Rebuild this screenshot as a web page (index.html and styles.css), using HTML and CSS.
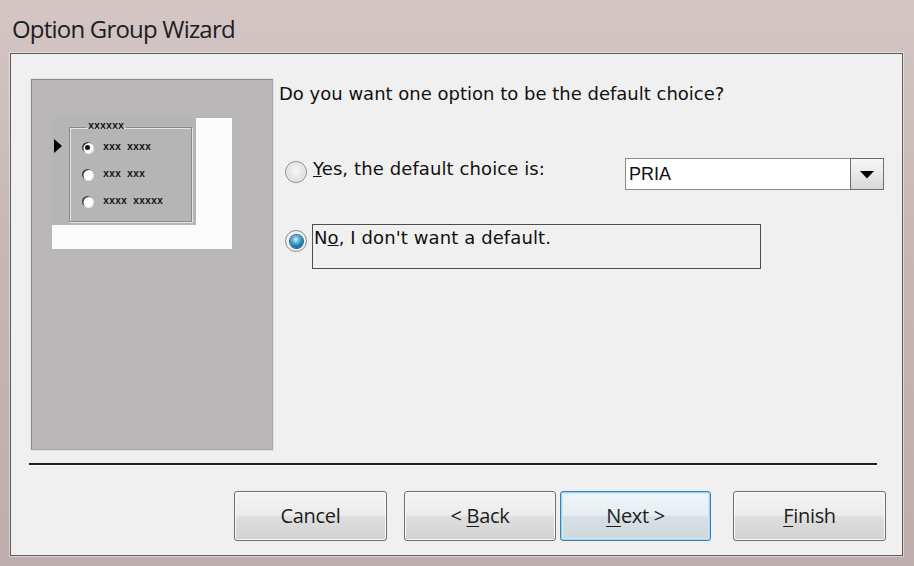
FILE: index.html
```html
<!DOCTYPE html>
<html>
<head>
<meta charset="utf-8">
<title>Option Group Wizard</title>
<link rel="stylesheet" href="styles.css">
</head>
<body>
<div class="window">
  <div class="titlebar"><span class="title">Option Group Wizard</span></div>
  <div class="client">
    <div class="top">
      <div class="preview">
        <div class="sample">
          <div class="sample-gray">
            <span class="pointer"></span>
            <fieldset class="groupbox">
              <legend class="gb-label">xxxxxx</legend>
              <div class="srow"><span class="sradio on"></span><span class="stext">xxx xxxx</span></div>
              <div class="srow"><span class="sradio"></span><span class="stext">xxx xxx</span></div>
              <div class="srow"><span class="sradio"></span><span class="stext">xxxx xxxxx</span></div>
            </fieldset>
          </div>
        </div>
      </div>
      <div class="content">
        <p class="question">Do you want one option to be the default choice?</p>
        <div class="opt opt-yes">
          <span class="radio"></span>
          <span class="label"><u>Y</u>es, the default choice is:</span>
          <div class="combo">
            <span class="combo-field">PRIA</span>
            <span class="combo-btn"><svg width="14" height="8" viewBox="0 0 14 8"><polygon points="0,0 14,0 7,7.5" fill="#000"/></svg></span>
          </div>
        </div>
        <div class="opt opt-no">
          <span class="radio checked"><span class="dot"></span></span>
          <div class="focusbox"><span class="label">N<u>o</u>, I don't want a default.</span></div>
        </div>
      </div>
    </div>
    <div class="sep"></div>
    <div class="buttons">
      <button class="btn btn-cancel">Cancel</button>
      <button class="btn btn-back">&lt; <u>B</u>ack</button>
      <button class="btn btn-next default"><u>N</u>ext &gt;</button>
      <button class="btn btn-finish"><u>F</u>inish</button>
    </div>
  </div>
</div>
</body>
</html>
```

FILE: styles.css
```css
* { box-sizing: border-box; }
html, body { margin: 0; padding: 0; }
body { width: 914px; height: 566px; overflow: hidden; font-family: "DejaVu Sans", sans-serif; }

.window {
  width: 914px; height: 566px;
  display: flex; flex-direction: column;
  padding: 0 11px 10px 10px;
  background: linear-gradient(180deg, #d3c6c4 0%, #c7b8b7 40%, #bdaead 100%);
}
.titlebar {
  height: 53px; flex: none;
  display: flex; align-items: center;
  padding: 4px 0 0 2px;
}
.title {
  font-family: "Open Sans", sans-serif;
  font-size: 24px; color: #1e1e1e; letter-spacing: -0.8px;
}

.client {
  flex: 1;
  display: flex; flex-direction: column;
  border: 1px solid #5e5a5a;
  box-shadow: 0 0 0 1px rgba(255,255,255,0.45);
  background: #f0f0f0;
  padding: 25px 16px 0 20px;
}

.top { display: flex; align-items: flex-start; }

.preview {
  width: 242px; height: 371px; flex: none;
  background: #b9b7b8;
  border: 1px solid #8d8d8d;
  border-right-color: #a8a8a8; border-bottom-color: #a8a8a8;
  box-shadow: 0 0 0 1px #e2e2e2;
  padding: 38px 0 0 20px;
}
.sample {
  width: 180px; height: 131px;
  background: #fbfbfb;
}
.sample-gray {
  width: 144px; height: 107px;
  background: #b5b5b5;
  display: flex; align-items: flex-start;
  padding: 4px 0 0 2px;
}
.pointer {
  width: 0; height: 0; flex: none;
  margin-top: 17px; margin-right: 7px;
  border-top: 7px solid transparent;
  border-bottom: 7px solid transparent;
  border-left: 8px solid #000;
}
.groupbox {
  margin: 0; width: 123px; height: 100px;
  padding: 2px 0 0 12px;
  border: 1px solid #8a8a8a;
  box-shadow: inset 1px 1px 0 #e4e4e4, 1px 1px 0 #e4e4e4;
  min-width: 0;
}
.gb-label {
  margin-left: 4px; padding: 0 2px;
  font-family: "Liberation Mono", monospace; font-weight: bold;
  font-size: 10px; line-height: 10px; color: #111;
}
.srow { display: flex; align-items: center; height: 27px; }
.sradio {
  width: 11px; height: 11px; border-radius: 50%;
  background: #fdfdfd;
  box-shadow: inset 1.5px 1px 0 #3a3a3a, 1px 1px 0 #e8e8e8;
  margin-right: 10px;
  display: flex; align-items: center; justify-content: center;
}
.sradio.on::after {
  content: ""; width: 5px; height: 5px; border-radius: 50%; background: #111;
}
.stext {
  font-family: "Liberation Mono", monospace; font-weight: bold;
  font-size: 10px; color: #111;
}

.content {
  width: 605px; margin-left: 6px; padding-top: 4px;
  color: #111;
}
.question {
  margin: 0; font-size: 18px; line-height: 22px;
}
.opt { display: flex; align-items: flex-start; }
.opt-yes { margin-top: 53px; height: 32px; }
.opt-no { margin-top: 34px; }
.label { font-size: 18px; line-height: 22px; letter-spacing: 0.1px; }
.opt-yes .label { margin-top: 0; margin-left: 6px; }

.radio {
  width: 22px; height: 22px; border-radius: 50%; flex: none;
  margin-left: 6px;
  border: 1px solid #8b8c8c;
  background: radial-gradient(circle at 50% 45%, #f7f7f7 0%, #e4e4e4 55%, #cfcfcf 100%);
  box-shadow: inset 0 0 0 1px #f4f4f4;
  display: flex; align-items: center; justify-content: center;
}
.opt-yes .radio { margin-top: 3px; }
.opt-no .radio { margin-top: 6px; background: radial-gradient(circle, #fafafa 0%, #e6e6e6 100%); }
.dot {
  width: 13px; height: 13px; border-radius: 50%;
  background: radial-gradient(circle at 45% 35%, #d8f1fb 0%, #6dc0e4 25%, #1d7bb0 60%, #0b3f66 100%);
  box-shadow: 0 0 0 1px #2b5d7f;
}

.combo {
  margin-left: auto;
  width: 259px; height: 32px;
  display: flex;
}
.combo-field {
  flex: 1;
  background: #fff;
  border: 1px solid #8c8c8c; border-right: none;
  font-family: "Liberation Sans", sans-serif;
  font-size: 18px; line-height: 30px; padding-left: 3px;
  color: #111;
}
.combo-btn {
  width: 34px;
  border: 1px solid #6c6c6c;
  background: linear-gradient(180deg, #f6f6f6 0%, #e9e9e9 50%, #d8d8d8 100%);
  display: flex; align-items: center; justify-content: center;
  padding-top: 1px;
}

.focusbox {
  margin-left: 5px;
  width: 449px; height: 45px;
  border: 1px solid #4e4e4e;
  padding: 2px 0 0 1px;
}

.sep {
  width: 848px; margin: 13px 0 0 -2px;
  height: 3px;
  border-top: 2px solid #1e1e1e;
  border-bottom: 1px solid #ffffff;
}

.buttons {
  display: flex; justify-content: flex-end;
  margin-top: 25px;
}
.btn {
  height: 50px; width: 153px;
  border: 1px solid #6e6e6e; border-radius: 3px;
  background: linear-gradient(180deg, #f4f4f4 0%, #ececec 48%, #dfdfdf 52%, #d2d2d2 100%);
  box-shadow: inset 0 0 0 1px #fafafa;
  font-family: "Open Sans", sans-serif; font-size: 20px; color: #1c1c1c;
  letter-spacing: -0.3px;
  padding: 0 0 2px; margin: 0;
}
.btn-back { margin-left: 17px; width: 152px; }
.btn-next { margin-left: 4px; width: 151px; }
.btn-finish { margin-left: 22px; }
.btn.default {
  border-color: #3b7fae;
  box-shadow: inset 0 0 0 1px #9fd4ef, inset 0 0 0 2px #cdeaf8;
  background: linear-gradient(180deg, #f0f6f9 0%, #e6eef2 48%, #d6e0e5 52%, #cfd8dc 100%);
}
.btn u { text-decoration-thickness: 1px; text-underline-offset: 3px; }
```
